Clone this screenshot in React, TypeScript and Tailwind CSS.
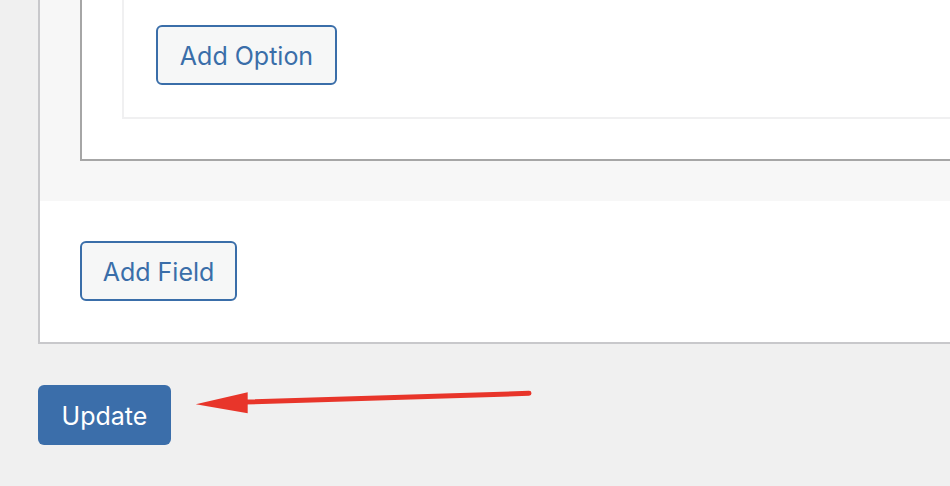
import React from "react";

const font = { fontFamily: "Inter, 'Noto Sans', 'Liberation Sans', sans-serif" };

function OutlineButton({ label, width }: { label: string; width: string }) {
  return (
    <button
      type="button"
      className={`${width} h-[60px] rounded-[6px] border-2 border-[#3a6ea9] bg-[#f6f7f7] pt-[2px] text-[25px] leading-none text-[#3a6ea9]`}
    >
      {label}
    </button>
  );
}

export default function App() {
  return (
    <div className="relative h-[486px] w-[950px] overflow-hidden bg-[#f0f0f0]" style={font}>
      {/* settings panel, cut off at the top and right */}
      <div className="ml-[38px] w-[1000px] border-b-2 border-l-2 border-[#c8c8cb] bg-white">
        <div className="bg-[#f7f7f7] pb-[40px] pl-[40px]">
          <div className="border-b-2 border-l-2 border-[#a6a6a6] bg-white pb-[40px] pl-[40px]">
            <div className="border-b-2 border-l-2 border-[#f0f0f1] bg-white pb-[32px] pl-[32px] pt-[25px]">
              <OutlineButton label="Add Option" width="w-[181px]" />
            </div>
          </div>
        </div>
        <div className="pb-[41px] pl-[40px] pt-[40px]">
          <OutlineButton label="Add Field" width="w-[157px]" />
        </div>
      </div>

      <div className="ml-[38px] mt-[41px]">
        <button
          type="button"
          className="h-[60px] w-[133px] rounded-[6px] bg-[#3b6eaa] pt-[2px] text-[25px] leading-none text-white"
        >
          Update
        </button>
      </div>

      {/* annotation arrow */}
      <svg
        className="absolute left-[180px] top-[380px]"
        width="360"
        height="50"
        viewBox="0 0 360 50"
      >
        <line x1="64" y1="22" x2="349" y2="13.3" stroke="#e8352a" strokeWidth="5" strokeLinecap="round" />
        <polygon points="15.7,24.3 67.7,12.3 67.7,33.3" fill="#e8352a" />
      </svg>
    </div>
  );
}
